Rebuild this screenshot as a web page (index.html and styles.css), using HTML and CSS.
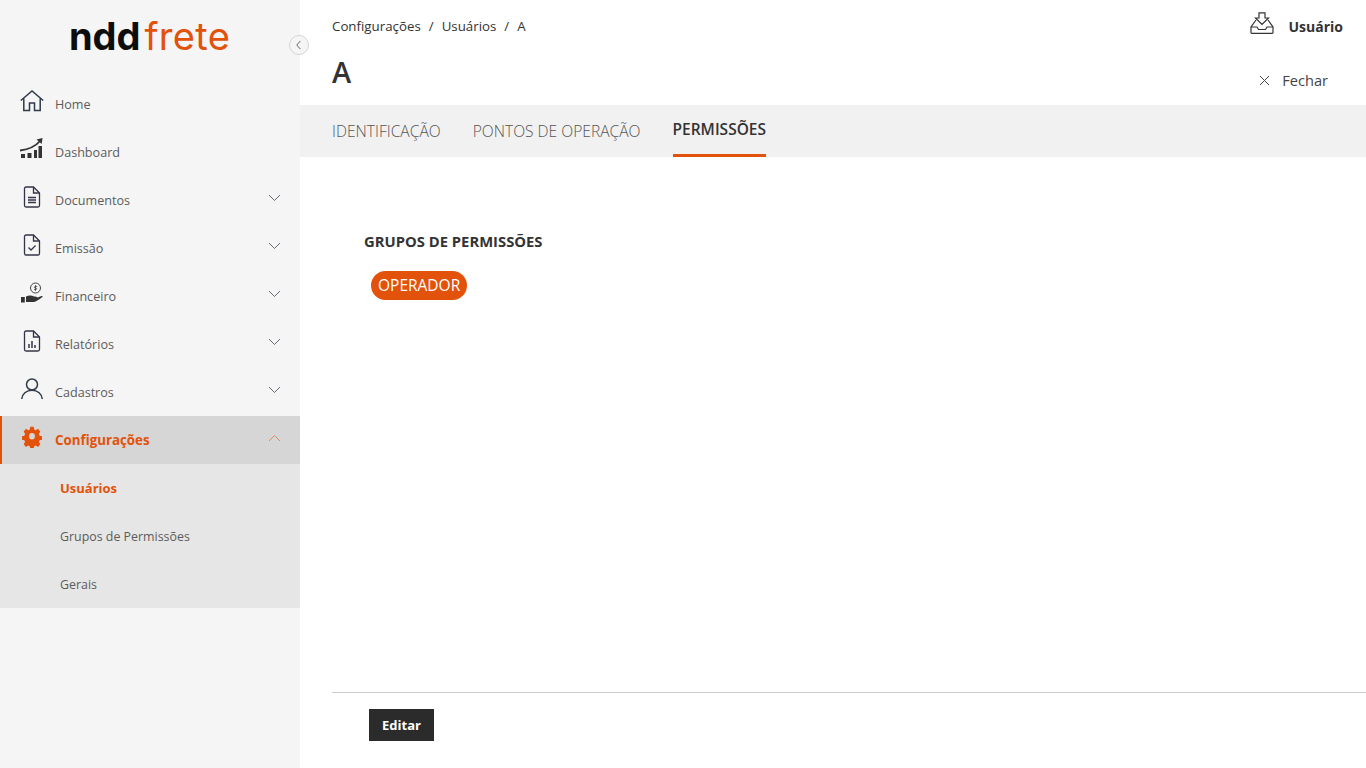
FILE: index.html
```html
<!DOCTYPE html>
<html lang="pt-BR">
<head>
<meta charset="utf-8">
<title>nddFrete</title>
<link rel="stylesheet" href="styles.css">
</head>
<body>
<div class="app">
  <aside class="sidebar">
    <div class="logo"><span class="logo-ndd">ndd</span><span class="logo-frete">frete</span></div>
    <button class="collapse" aria-label="Recolher"><svg width="20" height="20" viewBox="0 0 20 20"><path d="M11.5 5.5 7.5 10l4 4.5" fill="none" stroke="#555" stroke-width="1"/></svg></button>
    <nav>
      <a class="nav-item"><span class="nav-icon"><svg width="24" height="22" viewBox="0 0 24 22" fill="none" stroke="#2f3a4a" stroke-width="1.5"><path d="M.8 10.5 12 1l11.2 9.5"/><path d="M3.8 8.5V20.5H9.5V13h5v7.5h5.7V8.5"/></svg></span><span class="nav-label">Home</span></a>
      <a class="nav-item"><span class="nav-icon"><svg width="24" height="22" viewBox="0 0 24 22"><path d="M0 12.500C8 11.500 15 9 20 3" fill="none" stroke="#333" stroke-width="1.800"/><path d="M16.500 1.500 22.500 0l-.8 6z" fill="#333"/><path d="M1 16h4v4H1zM7.500 15h4v5h-4zM14 12h3v8h-3zM18.500 8h3.500v12h-3.500z" fill="#333"/></svg></span><span class="nav-label">Dashboard</span></a>
      <a class="nav-item"><span class="nav-icon"><svg width="24" height="22" viewBox="0 0 24 22" fill="none" stroke="#343448" stroke-width="1.300"><path d="M13.500 1H6A1.500 1.500 0 0 0 4.500 2.500v17A1.500 1.500 0 0 0 6 21h12a1.500 1.500 0 0 0 1.500-1.500V7z"/><path d="M13.500 1v6h6"/><path d="M8 11.500h8M8 14h8M8 16.500h8"/></svg></span><span class="nav-label">Documentos</span><svg class="chev" width="13" height="8" viewBox="0 0 13 8"><path d="M1 1l5.500 5.500L12 1" fill="none" stroke="#667" stroke-width="1"/></svg></a>
      <a class="nav-item"><span class="nav-icon"><svg width="24" height="22" viewBox="0 0 24 22" fill="none" stroke="#343448" stroke-width="1.300"><path d="M13.500 1H6A1.500 1.500 0 0 0 4.500 2.500v17A1.500 1.500 0 0 0 6 21h12a1.500 1.500 0 0 0 1.500-1.500V7z"/><path d="M13.500 1v6h6"/><path d="M8.500 13.500l2.500 2.500 4.500-4.500"/></svg></span><span class="nav-label">Emissão</span><svg class="chev" width="13" height="8" viewBox="0 0 13 8"><path d="M1 1l5.500 5.500L12 1" fill="none" stroke="#667" stroke-width="1"/></svg></a>
      <a class="nav-item"><span class="nav-icon"><svg width="24" height="22" viewBox="0 0 24 22"><circle cx="15.500" cy="6" r="5" fill="none" stroke="#444" stroke-width="1"/><path d="M15.500 3v6M17.200 4.500h-2.400a1 1 0 0 0 0 1.500h1.400a1 1 0 0 1 0 1.500H14" fill="none" stroke="#444" stroke-width=".8"/><path d="M1 15h3.800v5.500H1z" fill="#333"/><path d="M6 14.500c3-1.500 6-1 8 0 2 0 3 .5 3.500 1l4-1.500c1-.2 1.500.5.8 1-2.800 2.500-5.500 4-8.300 5H6z" fill="#333"/></svg></span><span class="nav-label">Financeiro</span><svg class="chev" width="13" height="8" viewBox="0 0 13 8"><path d="M1 1l5.500 5.500L12 1" fill="none" stroke="#667" stroke-width="1"/></svg></a>
      <a class="nav-item"><span class="nav-icon"><svg width="24" height="22" viewBox="0 0 24 22" fill="none" stroke="#343448" stroke-width="1.300"><path d="M13.500 1H6A1.500 1.500 0 0 0 4.500 2.500v17A1.500 1.500 0 0 0 6 21h12a1.500 1.500 0 0 0 1.500-1.500V7z"/><path d="M13.500 1v6h6"/><path d="M9 14v4M12 11v7M15 15v3" stroke-width="1.500"/></svg></span><span class="nav-label">Relatórios</span><svg class="chev" width="13" height="8" viewBox="0 0 13 8"><path d="M1 1l5.500 5.500L12 1" fill="none" stroke="#667" stroke-width="1"/></svg></a>
      <a class="nav-item"><span class="nav-icon"><svg width="24" height="22" viewBox="0 0 24 22" fill="none" stroke="#2f3a4a" stroke-width="1.500"><circle cx="12" cy="6.500" r="5.500"/><path d="M1.700 21c.5-5 4.500-8.800 10.300-8.800S21.800 16 22.300 21"/></svg></span><span class="nav-label">Cadastros</span><svg class="chev" width="13" height="8" viewBox="0 0 13 8"><path d="M1 1l5.500 5.500L12 1" fill="none" stroke="#667" stroke-width="1"/></svg></a>
      <a class="nav-item active"><span class="nav-icon"><svg width="24" height="22" viewBox="0 0 24 22"><path fill="#e2520a" fill-rule="evenodd" d="M9.800.800h4.400l.6 3 2 .9 2.700-1.600 2.900 3.100-1.700 2.500.8 2 3 .6v4l-3 .6-.8 2 1.700 2.500-2.900 2.900-2.700-1.600-2 .9-.6 2.900H9.800l-.6-2.900-2-.9-2.700 1.600-2.900-2.900 1.700-2.500-.8-2-3-.6v-4l3-.6.800-2L1.600 6.200l2.900-3.100 2.700 1.600 2-.9zM12 7.700a3.600 3.600 0 1 0 0 7.200 3.600 3.600 0 0 0 0-7.200z" transform="translate(2.400 0) scale(.8 .9)"/></svg></span><span class="nav-label">Configurações</span><svg class="chev" width="13" height="8" viewBox="0 0 13 8"><path d="M1 7l5.500-5.500L12 7" fill="none" stroke="#d98a66" stroke-width="1"/></svg></a>
      <div class="subnav">
        <a class="sub-item current">Usuários</a>
        <a class="sub-item">Grupos de Permissões</a>
        <a class="sub-item">Gerais</a>
      </div>
    </nav>
  </aside>
  <main class="main">
    <header class="topbar">
      <div class="top-row">
        <div class="breadcrumb"><span>Configurações</span><span>/</span><span>Usuários</span><span>/</span><span>A</span></div>
        <div class="user"><svg width="24" height="22" viewBox="0 0 24 22" fill="none" stroke="#333" stroke-width="1.200"><path d="M9 .8h6V6h3.500L12 12.500 5.500 6H9z"/><path d="M6 8 1 15v5.500a.8.8 0 0 0 .8.8h20.400a.8.8 0 0 0 .8-.8V15l-5-7"/><path d="M1 15h6l1.500 2.500h7L17 15h6"/></svg><span>Usuário</span></div>
      </div>
      <div class="title-row">
        <h1>A</h1>
        <a class="close"><svg width="11" height="11" viewBox="0 0 11 11"><path d="M1 1l9 9M10 1l-9 9" stroke="#444" stroke-width="1" fill="none"/></svg><span>Fechar</span></a>
      </div>
    </header>
    <div class="tabs">
      <a class="tab">IDENTIFICAÇÃO</a>
      <a class="tab">PONTOS DE OPERAÇÃO</a>
      <a class="tab selected">PERMISSÕES</a>
    </div>
    <section class="content">
      <h2>GRUPOS DE PERMISSÕES</h2>
      <div class="tags"><span class="tag">OPERADOR</span></div>
    </section>
    <footer class="footer"><button class="edit">Editar</button></footer>
  </main>
</div>
</body>
</html>
```
FILE: styles.css
```css
* { box-sizing: border-box; }
html, body { margin: 0; height: 100%; }
body { font-family: "Open Sans", "Noto Sans", sans-serif; color: #333; background: #fff; }
.app { display: flex; height: 768px; overflow: hidden; }
.sidebar { position: relative; width: 300px; flex: none; background: #f5f5f5; }
.logo { height: 80px; display: flex; justify-content: center; align-items: flex-start; padding-top: 11px; padding-right: 1px; font-family: Inter, sans-serif; font-size: 38px; line-height: 50px; }
.logo-ndd { color: #0d0d0d; font-weight: 700; margin-right: 4px; }
.logo-frete { color: #e2520a; font-weight: 400; letter-spacing: .3px; }
.collapse { position: absolute; left: 289px; top: 35px; width: 20px; height: 20px; padding: 0; border: 1px solid #d5d5d5; border-radius: 50%; background: #f5f5f5; display: flex; align-items: center; justify-content: center; }
.nav-item { display: flex; align-items: center; height: 48px; padding: 0 19px 0 20px; font-size: 12.600px; font-weight: 400; color: #5c5c5c; }
.nav-icon { width: 35px; flex: none; display: flex; margin-top: -6px; }
.nav-label { flex: 1; }
.chev { margin-top: -4px; }
.nav-item.active { background: #d6d6d6; border-left: 2px solid #e2520a; padding-left: 18px; color: #e2520a; font-weight: 700; font-size: 13.300px; }
.subnav { background: #e6e6e6; }
.sub-item { display: flex; align-items: center; height: 48px; padding-left: 60px; font-size: 12.400px; color: #5c5c5c; }
.sub-item.current { color: #e2520a; font-weight: 700; font-size: 13px; }
.main { flex: 1; display: flex; flex-direction: column; min-width: 0; }
.topbar { height: 105px; padding-left: 32px; flex: none; }
.top-row { display: flex; justify-content: space-between; align-items: center; height: 52px; padding-right: 23px; }
.breadcrumb { display: flex; gap: 8px; font-size: 13.300px; color: #333; }
.user { display: flex; align-items: center; gap: 15px; font-size: 14px; font-weight: 700; }
.user svg { margin-top: -6px; }
.title-row { display: flex; justify-content: space-between; align-items: center; height: 40px; padding-right: 38px; }
h1 { margin: -2px 0 0; font-size: 29px; font-weight: 600; color: #333; }
.close { display: flex; align-items: center; gap: 12px; font-size: 14.600px; color: #444; margin-top: 16px; }
.tabs { display: flex; gap: 32px; height: 52px; padding-left: 32px; background: #f1f1f1; flex: none; }
.tab { display: flex; align-items: center; padding-bottom: 1px; font-size: 15.600px; font-weight: 300; color: #555; }
.tab.selected { font-size: 15.500px; font-weight: 600; color: #333; border-bottom: 3px solid #e2520a; padding: 0 0 1px; }
.content { flex: 1; padding: 75px 0 0 64px; }
h2 { margin: 0; font-size: 14.800px; line-height: 18px; font-weight: 700; color: #333; }
.tags { margin-top: 21px; padding-left: 7px; }
.tag { display: inline-flex; align-items: center; width: 96px; height: 29px; padding: 0 0 2px 7px; border-radius: 15px; background: #e2520a; color: #fff; font-size: 15.500px; }
.footer { height: 76px; flex: none; margin-left: 32px; border-top: 1px solid #ccc; padding: 16px 0 0 37px; }
.edit { display: block; width: 65px; height: 32px; padding: 0; border: 0; background: #2b2b2b; color: #fff; font: 700 13px "Open Sans", sans-serif; }
```
